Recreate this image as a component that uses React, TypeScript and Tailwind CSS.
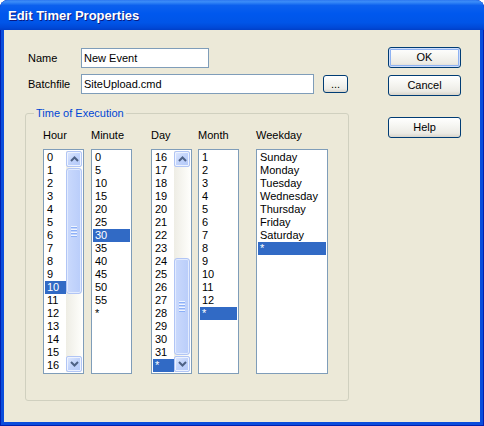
import React from "react";

const hours = Array.from({ length: 17 }, (_, i) => String(i));
const minutes = [...Array.from({ length: 12 }, (_, i) => String(i * 5)), "*"];
const days = [...Array.from({ length: 16 }, (_, i) => String(i + 16)), "*"];
const months = [...Array.from({ length: 12 }, (_, i) => String(i + 1)), "*"];
const weekdays = ["Sunday", "Monday", "Tuesday", "Wednesday", "Thursday", "Friday", "Saturday", "*"];

export default function App() {
  return (
    <div className="w-[484px] h-[426px] flex flex-col rounded-t-[8px] overflow-hidden bg-[#0A4DDC] shadow-[inset_1px_0_#0020B0,inset_-1px_0_#0020B0,inset_0_-1px_#0020B0] font-['Liberation_Sans',Arial,sans-serif] text-[11px] text-black select-none">
      {/* Title Bar */}
      <div className="h-[30px] shrink-0 flex items-center pl-[8px] pt-[1px] bg-[linear-gradient(180deg,#2E78F0_0%,#3C8DF8_6%,#0C60EE_18%,#0058EE_45%,#0055E8_75%,#0049D8_92%,#003FC8_100%)]">
        <span className="text-white font-bold text-[13px] [text-shadow:1px_1px_0_#0A1A80]">Edit Timer Properties</span>
      </div>

      {/* Body */}
      <div className="flex-1 mx-[4px] mb-[4px] bg-[#ECE9D8] flex pt-[18px] pl-[24px]">
        <div className="w-[321px] flex flex-col">
          <div className="flex items-center h-[20px]">
            <span className="w-[53px]">Name</span>
            <div className="w-[128px] h-[20px] bg-white border border-[#7F9DB9] pl-[2px] leading-[18px]">New Event</div>
          </div>
          <div className="flex items-center h-[20px] mt-[6px]">
            <span className="w-[53px]">Batchfile</span>
            <div className="w-[233px] h-[20px] bg-white border border-[#7F9DB9] pl-[2px] leading-[18px]">SiteUpload.cmd</div>
            <XpButton className="ml-[9px] w-[25px] h-[18px]">...</XpButton>
          </div>

          {/* Group box */}
          <div className="relative mt-[19px] ml-[-3px] w-[324px] h-[288px] border border-[#D0D0BF] rounded-[3px] pt-[15px] pl-[17px]">
            <span className="absolute -top-[7px] left-[8px] px-[2px] bg-[#ECE9D8] text-[#0046D5] leading-[13px]">Time of Execution</span>
            <div className="flex">
              <Column label="Hour" items={hours} selected={10} width="w-[41px]" scroll={{ offset: 0, height: 126 }} />
              <Column label="Minute" items={minutes} selected={6} width="w-[41px]" className="ml-[7px]" />
              <Column label="Day" items={days} selected={16} width="w-[41px]" className="ml-[19px]" scroll={{ offset: 90, height: 97 }} />
              <Column label="Month" items={months} selected={12} width="w-[41px]" className="ml-[6px]" />
              <Column label="Weekday" items={weekdays} selected={7} width="w-[72px]" className="ml-[17px]" />
            </div>
          </div>
        </div>

        {/* Buttons */}
        <div className="ml-[39px] mt-[-1px] flex flex-col">
          <XpButton className="w-[73px] h-[21px]" isDefault>OK</XpButton>
          <XpButton className="w-[73px] h-[21px] mt-[7px]">Cancel</XpButton>
          <XpButton className="w-[73px] h-[21px] mt-[21px]">Help</XpButton>
        </div>
      </div>
    </div>
  );
}

function XpButton({ children, className = "", isDefault = false }: { children: React.ReactNode; className?: string; isDefault?: boolean }) {
  return (
    <div
      className={`flex items-center justify-center border border-[#003C74] rounded-[3px] bg-[linear-gradient(180deg,#FFFFFF_0%,#F6F6F2_40%,#ECEBE5_80%,#D8D4CA_100%)] ${
        isDefault ? "shadow-[inset_0_0_0_1px_#CEDDFB,inset_0_0_0_2px_#8EB2F2]" : ""
      } ${className}`}
    >
      {children}
    </div>
  );
}

function Column({
  label,
  items,
  selected,
  width,
  className = "",
  scroll,
}: {
  label: string;
  items: string[];
  selected: number;
  width: string;
  className?: string;
  scroll?: { offset: number; height: number };
}) {
  return (
    <div className={`flex flex-col ${className}`}>
      <div className="h-[13px] leading-[13px] mb-[7px]">{label}</div>
      <div className={`${width} h-[225px] bg-white border border-[#7F9DB9] p-[1px] flex`}>
        <div className="flex-1 overflow-hidden">
          {items.map((it, i) => (
            <div
              key={i}
              className={`h-[13px] leading-[13px] pl-[2px] whitespace-nowrap ${i === selected ? "bg-[#316AC5] text-white" : ""}`}
            >
              {it}
            </div>
          ))}
        </div>
        {scroll && <ScrollBar offset={scroll.offset} height={scroll.height} />}
      </div>
    </div>
  );
}

function ScrollBar({ offset, height }: { offset: number; height: number }) {
  return (
    <div className="w-[16px] h-full flex flex-col bg-[linear-gradient(90deg,#EEEDE5,#FEFEFB)]">
      <ArrowButton dir="up" />
      <div className="flex-1 flex flex-col">
        <div style={{ height: offset }} />
        <div
          className="mt-[1px] mx-[0px] rounded-[3px] border border-[#B1C5F5] bg-[linear-gradient(90deg,#CAD9FC,#B9CDFA)] shadow-[inset_0_0_0_1px_#E2EBFE] flex flex-col items-center justify-center gap-[1px]"
          style={{ height }}
        >
          {[0, 1, 2, 3].map((i) => (
            <div key={i} className="w-[6px] flex flex-col">
              <div className="h-[1px] bg-[#EEF4FE]" />
              <div className="h-[1px] bg-[#8CB0F8]" />
            </div>
          ))}
        </div>
      </div>
      <ArrowButton dir="down" />
    </div>
  );
}

function ArrowButton({ dir }: { dir: "up" | "down" }) {
  return (
    <div className="h-[16px] w-[16px] rounded-[2px] border border-[#B1C5F5] bg-[linear-gradient(135deg,#E0E9FE,#C1D3FB_50%,#B4C9F9)] shadow-[inset_0_0_0_1px_#EEF3FE] flex items-center justify-center">
      <svg width="9" height="6" viewBox="0 0 9 6">
        {dir === "up" ? (
          <path d="M1 5 L4.5 1.5 L8 5" fill="none" stroke="#4D6185" strokeWidth="2" />
        ) : (
          <path d="M1 1 L4.5 4.5 L8 1" fill="none" stroke="#4D6185" strokeWidth="2" />
        )}
      </svg>
    </div>
  );
}
